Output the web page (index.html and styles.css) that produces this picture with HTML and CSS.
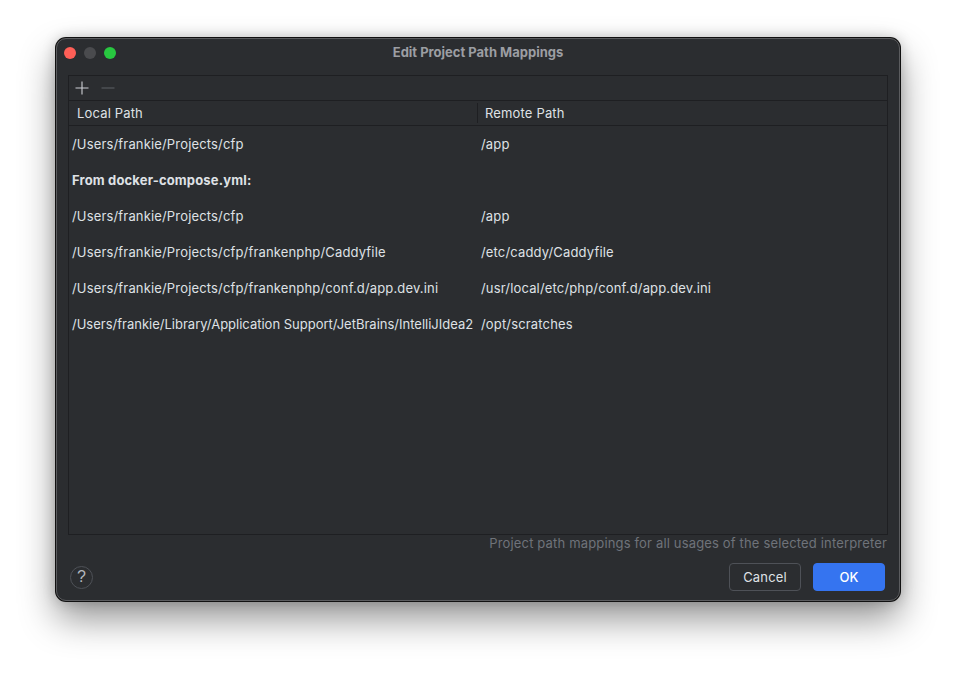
FILE: index.html
```html
<!DOCTYPE html>
<html>
<head>
<meta charset="utf-8">
<link rel="stylesheet" href="styles.css">
</head>
<body>
<div class="window">
  <div class="titlebar">
    <div class="lights">
      <span class="light red"></span>
      <span class="light gray"></span>
      <span class="light green"></span>
    </div>
    <div class="title">Edit Project Path Mappings</div>
  </div>
  <div class="table">
    <div class="toolbar">
      <svg class="tool" width="14" height="14" viewBox="0 0 14 14"><path d="M7 0.5V13.5M0.5 7H13.5" stroke="#ced0d6" stroke-width="1.1"/></svg>
      <svg class="tool" width="14" height="14" viewBox="0 0 14 14"><path d="M0.5 7H13.5" stroke="#5a5d63" stroke-width="1.1"/></svg>
    </div>
    <div class="header">
      <div class="hcell local">Local Path</div>
      <div class="hcell remote">Remote Path</div>
    </div>
    <div class="rows">
      <div class="row"><div class="cell local">/Users/frankie/Projects/cfp</div><div class="cell remote">/app</div></div>
      <div class="row group"><div class="cell local">From docker-compose.yml:</div><div class="cell remote"></div></div>
      <div class="row"><div class="cell local">/Users/frankie/Projects/cfp</div><div class="cell remote">/app</div></div>
      <div class="row"><div class="cell local">/Users/frankie/Projects/cfp/frankenphp/Caddyfile</div><div class="cell remote">/etc/caddy/Caddyfile</div></div>
      <div class="row"><div class="cell local">/Users/frankie/Projects/cfp/frankenphp/conf.d/app.dev.ini</div><div class="cell remote">/usr/local/etc/php/conf.d/app.dev.ini</div></div>
      <div class="row"><div class="cell local tight">/Users/frankie/Library/Application Support/JetBrains/IntelliJIdea2</div><div class="cell remote">/opt/scratches</div></div>
    </div>
  </div>
  <div class="hint">Project path mappings for all usages of the selected interpreter</div>
  <div class="footer">
    <div class="help">?</div>
    <div class="buttons">
      <button class="btn cancel">Cancel</button>
      <button class="btn ok">OK</button>
    </div>
  </div>
</div>
</body>
</html>
```

FILE: styles.css
```css
html, body {
  margin: 0;
  padding: 0;
  background: #ffffff;
}
body {
  padding: 38px 0 0 56px;
  height: 676px;
  box-sizing: border-box;
  font-family: Inter, "Noto Sans", "Liberation Sans", sans-serif;
  font-size: 13px;
  letter-spacing: 0.16px;
  color: #dfe1e5;
}
.window {
  box-sizing: border-box;
  width: 844px;
  height: 563px;
  background: #2b2d30;
  border: 1px solid #5b5c5f;
  border-radius: 10px;
  box-shadow: 0 0 0 1px #111, 0 18px 36px rgba(0,0,0,0.42), 0 0 14px rgba(0,0,0,0.22);
  display: flex;
  flex-direction: column;
}
.titlebar {
  height: 36px;
  display: flex;
  align-items: center;
  position: relative;
  flex: none;
}
.lights {
  display: flex;
  gap: 8px;
  padding-left: 7px;
  margin-top: -9px;
}
.light {
  width: 12px;
  height: 12px;
  border-radius: 50%;
  display: block;
}
.red { background: #fe5f57; }
.gray { background: #4a4b4e; }
.green { background: #28c840; }
.title {
  position: absolute;
  left: 0;
  right: 0;
  top: 5px;
  text-align: center;
  font-weight: 700;
  font-size: 13px;
  letter-spacing: 0;
  color: #9c9ea3;
}
.table {
  margin: 0 11px;
  height: 460px;
  box-sizing: border-box;
  border: 1px solid #1e1f22;
  flex: none;
  display: flex;
  flex-direction: column;
}
.toolbar {
  height: 24px;
  border-bottom: 1px solid #1e1f22;
  display: flex;
  align-items: center;
  gap: 12px;
  padding-left: 6px;
}
.tool { display: block; }
.header {
  height: 24px;
  border-bottom: 1px solid #1e1f22;
  display: flex;
  align-items: stretch;
}
.hcell {
  display: flex;
  align-items: center;
  color: #dfe1e5;
}
.hcell.local {
  width: 409px;
  padding-left: 8px;
  box-sizing: border-box;
  border-right: 1px solid #1e1f22;
  margin: 2px 0;
}
.hcell.remote {
  padding-left: 7px;
}
.rows {
  display: flex;
  flex-direction: column;
}
.row {
  height: 36px;
  display: flex;
  align-items: center;
}
.cell {
  white-space: nowrap;
  overflow: hidden;
}
.cell.local {
  width: 409px;
  padding-left: 3px;
  box-sizing: border-box;
}
.cell.local.tight {
  letter-spacing: 0;
}
.cell.remote {
  padding-left: 3px;
}
.row.group .cell.local {
  font-weight: 700;
}
.hint {
  height: 17px;
  line-height: 17px;
  text-align: right;
  padding-right: 12px;
  color: #6f737a;
  flex: none;
}
.footer {
  margin-top: 11px;
  height: 28px;
  display: flex;
  justify-content: space-between;
  align-items: center;
  padding: 0 14px 0 13px;
}
.help {
  box-sizing: border-box;
  width: 23px;
  height: 23px;
  border: 1px solid #4e5157;
  border-radius: 50%;
  display: flex;
  align-items: center;
  justify-content: center;
  color: #b4b8bf;
  font-size: 16px;
  letter-spacing: 0;
  font-family: "Liberation Sans", sans-serif;
}
.buttons {
  display: flex;
  gap: 12px;
}
.btn {
  width: 72px;
  height: 28px;
  border-radius: 4px;
  font-family: Inter, "Noto Sans", sans-serif;
  font-size: 13px;
  letter-spacing: 0.16px;
  color: #dfe1e5;
  padding: 0;
}
.cancel {
  background: #2b2d30;
  border: 1px solid #4e5157;
}
.ok {
  background: #3574f0;
  border: 1px solid #3574f0;
  color: #ffffff;
  font-weight: 500;
}
```
